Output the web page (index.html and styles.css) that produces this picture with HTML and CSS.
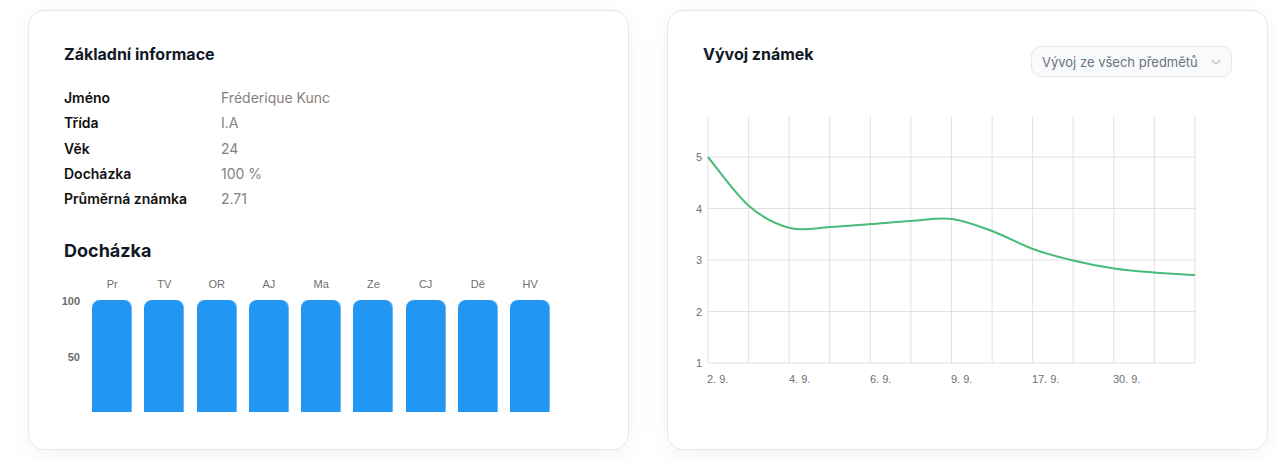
FILE: index.html
```html
<!DOCTYPE html>
<html lang="cs">
<head>
<meta charset="utf-8">
<title>Profil studenta</title>
<link rel="stylesheet" href="styles.css">
</head>
<body>
<main class="dashboard">
  <section class="card info-card">
    <h2 class="card-title">Základní informace</h2>
    <dl class="info-list">
      <dt>Jméno</dt><dd>Fréderique Kunc</dd>
      <dt>Třída</dt><dd>I.A</dd>
      <dt>Věk</dt><dd>24</dd>
      <dt>Docházka</dt><dd>100 %</dd>
      <dt>Průměrná známka</dt><dd>2.71</dd>
    </dl>

    <h2 class="section-title">Docházka</h2>
    <div class="bar-chart">
      <div class="y-axis">
        <span class="tick tick-100">100</span>
        <span class="tick tick-50">50</span>
      </div>
      <div class="bars">
        <div class="bar-col"><span class="bar-label">Pr</span><div class="bar-area"><div class="bar" style="height:100%"></div></div></div>
        <div class="bar-col"><span class="bar-label">TV</span><div class="bar-area"><div class="bar" style="height:100%"></div></div></div>
        <div class="bar-col"><span class="bar-label">OR</span><div class="bar-area"><div class="bar" style="height:100%"></div></div></div>
        <div class="bar-col"><span class="bar-label">AJ</span><div class="bar-area"><div class="bar" style="height:100%"></div></div></div>
        <div class="bar-col"><span class="bar-label">Ma</span><div class="bar-area"><div class="bar" style="height:100%"></div></div></div>
        <div class="bar-col"><span class="bar-label">Ze</span><div class="bar-area"><div class="bar" style="height:100%"></div></div></div>
        <div class="bar-col"><span class="bar-label">CJ</span><div class="bar-area"><div class="bar" style="height:100%"></div></div></div>
        <div class="bar-col"><span class="bar-label">Dě</span><div class="bar-area"><div class="bar" style="height:100%"></div></div></div>
        <div class="bar-col"><span class="bar-label">HV</span><div class="bar-area"><div class="bar" style="height:100%"></div></div></div>
      </div>
    </div>
  </section>

  <section class="card grades-card">
    <header class="card-header">
      <h2 class="card-title">Vývoj známek</h2>
      <div class="select">
        <span class="select-text">Vývoj ze všech předmětů</span>
        <svg class="chevron" width="12" height="12" viewBox="0 0 12 12" aria-hidden="true">
          <path d="M2 4.5 L6 8 L10 4.5" fill="none" stroke="#c3c7ce" stroke-width="1.5" stroke-linecap="round" stroke-linejoin="round"/>
        </svg>
      </div>
    </header>

    <svg class="line-chart" width="540" height="290" viewBox="0 0 540 290">
      <g class="grid">
        <line x1="28" y1="6" x2="28" y2="253"/>
        <line x1="68.6" y1="6" x2="68.6" y2="253"/>
        <line x1="109.2" y1="6" x2="109.2" y2="253"/>
        <line x1="149.7" y1="6" x2="149.7" y2="253"/>
        <line x1="190.3" y1="6" x2="190.3" y2="253"/>
        <line x1="230.9" y1="6" x2="230.9" y2="253"/>
        <line x1="271.5" y1="6" x2="271.5" y2="253"/>
        <line x1="312.1" y1="6" x2="312.1" y2="253"/>
        <line x1="352.6" y1="6" x2="352.6" y2="253"/>
        <line x1="393.2" y1="6" x2="393.2" y2="253"/>
        <line x1="433.8" y1="6" x2="433.8" y2="253"/>
        <line x1="474.4" y1="6" x2="474.4" y2="253"/>
        <line x1="515" y1="6" x2="515" y2="253"/>
        <line x1="28" y1="47" x2="515" y2="47"/>
        <line x1="28" y1="98.5" x2="515" y2="98.5"/>
        <line x1="28" y1="150" x2="515" y2="150"/>
        <line x1="28" y1="201.5" x2="515" y2="201.5"/>
        <line x1="28" y1="253" x2="515" y2="253"/>
      </g>
      <g class="axis-labels y-labels">
        <text x="22" y="51">5</text>
        <text x="22" y="102.5">4</text>
        <text x="22" y="154">3</text>
        <text x="22" y="205.5">2</text>
        <text x="22" y="257">1</text>
      </g>
      <g class="axis-labels x-labels">
        <text x="27" y="273">2. 9.</text>
        <text x="109" y="273">4. 9.</text>
        <text x="190" y="273">6. 9.</text>
        <text x="271" y="273">9. 9.</text>
        <text x="352" y="273">17. 9.</text>
        <text x="433" y="273">30. 9.</text>
      </g>
      <path class="grade-line" d="M28 47 C34.8 55.2 55.3 84.2 69 96 C82.7 107.8 96.5 114.5 110 118 C123.5 121.5 136.5 117.7 150 117 C163.5 116.3 177.5 115 191 114 C204.5 113 217.5 111.8 231 111 C244.5 110.2 258.5 107.3 272 109 C285.5 110.7 298.5 116 312 121 C325.5 126 339.5 134.1 353 139 C366.5 143.9 379.5 147.25 393 150.5 C406.5 153.75 420.5 156.5 434 158.5 C447.5 160.5 460.5 161.4 474 162.5 C487.5 163.6 508.2 164.6 515 165"/>
    </svg>
  </section>
</main>
</body>
</html>
```

FILE: styles.css
```css
* {
  box-sizing: border-box;
}

html, body {
  margin: 0;
  padding: 0;
}

body {
  background: #ffffff;
  font-family: Inter, "Noto Sans", sans-serif;
  color: #111827;
  overflow: hidden;
}

.dashboard {
  display: flex;
  gap: 38px;
  padding: 10px 0 0 28px;
  height: 460px;
}

.card {
  width: 601px;
  height: 440px;
  background: #ffffff;
  border: 1px solid #e5e7eb;
  border-radius: 16px;
  box-shadow: 0 6px 24px rgba(17, 24, 39, 0.05);
  padding: 31px 35px;
}

.card-title {
  margin: 0;
  font-size: 16px;
  line-height: 24px;
  font-weight: 700;
  color: #111827;
}

/* basic info */
.info-list {
  display: grid;
  grid-template-columns: 157px 1fr;
  grid-auto-rows: 25.25px;
  align-items: center;
  margin: 19px 0 0;
  font-size: 14px;
}

.info-list dt {
  font-weight: 600;
  color: #111111;
}

.info-list dd {
  margin: 0;
  color: #877f7f;
}

.section-title {
  margin: 26px 0 0;
  font-size: 18px;
  line-height: 28px;
  font-weight: 700;
  color: #111827;
}

/* attendance bar chart */
.bar-chart {
  display: flex;
  margin-top: 11px;
  font-family: "Liberation Sans", Arial, sans-serif;
  font-size: 11px;
}

.y-axis {
  width: 22px;
  display: flex;
  flex-direction: column;
  align-items: flex-end;
  padding-right: 6px;
  padding-top: 19px;
}

.tick {
  line-height: 12px;
  color: #6b6b6b;
  font-weight: 700;
}

.tick-50 {
  margin-top: 44px;
}

.bars {
  display: flex;
}

.bar-col {
  width: 52.25px;
  display: flex;
  flex-direction: column;
  align-items: center;
}

.bar-label {
  line-height: 16px;
  color: #707070;
}

.bar-area {
  margin-top: 8px;
  height: 112px;
  width: 40px;
  display: flex;
  align-items: flex-end;
}

.bar {
  width: 100%;
  background: #2196f3;
  border-right: 1px solid #6bb8f5;
  border-radius: 8px 8px 0 0;
}

/* grades chart */
.card-header {
  display: flex;
  justify-content: space-between;
  align-items: flex-start;
}

.select {
  margin-top: 4px;
  width: 201px;
  height: 31px;
  display: flex;
  align-items: center;
  justify-content: space-between;
  padding: 0 9px 0 10px;
  background: #f9fafb;
  border: 1px solid #e5e7eb;
  border-radius: 10px;
  font-size: 13px;
  color: #6b7280;
}

.chevron {
  display: block;
}

.line-chart {
  display: block;
  margin: 33px 0 0 -23px;
}

.grid line {
  stroke: #e2e2e2;
  stroke-width: 1;
}

.axis-labels text {
  font-family: "Liberation Sans", Arial, sans-serif;
  font-size: 11px;
  fill: #707070;
}

.y-labels text {
  text-anchor: end;
}

.grade-line {
  fill: none;
  stroke: #48bb78;
  stroke-width: 2;
}
```
